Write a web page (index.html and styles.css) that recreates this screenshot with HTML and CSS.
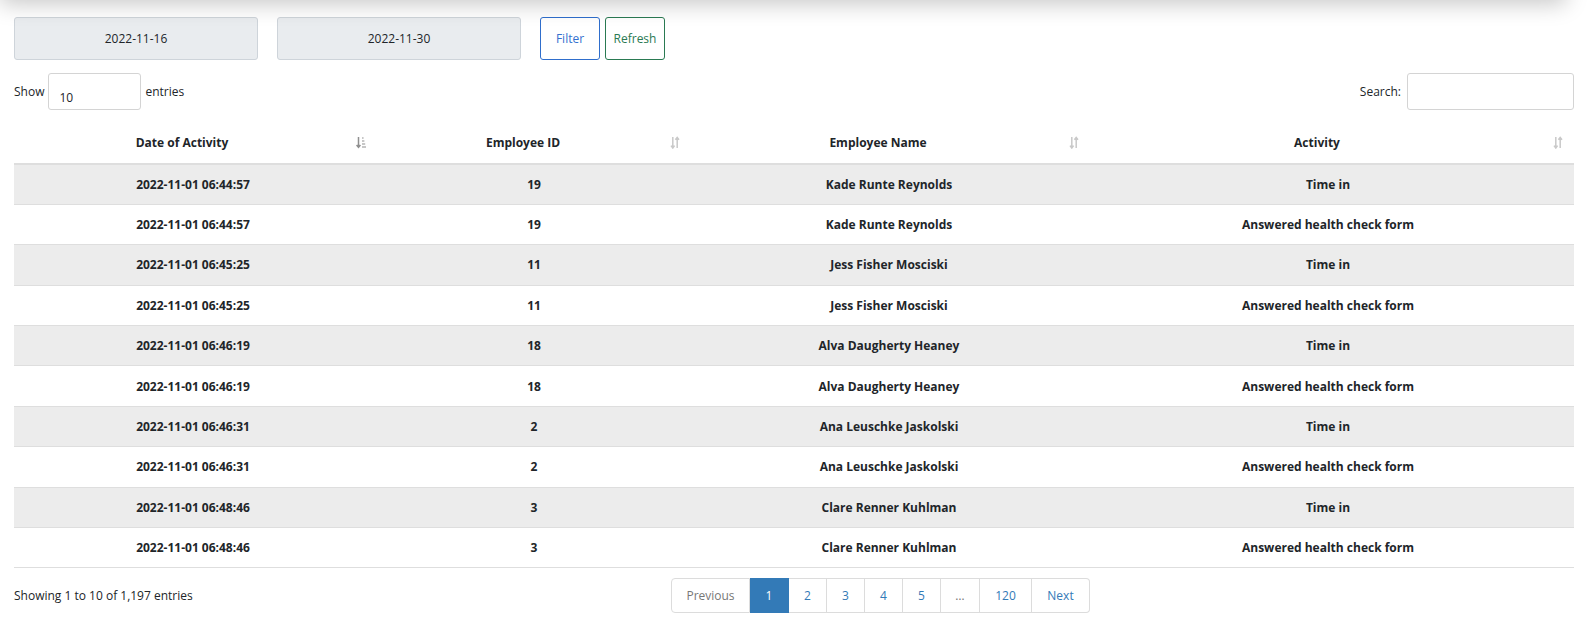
FILE: index.html
```html
<!DOCTYPE html>
<html>
<head>
<meta charset="utf-8">
<link rel="stylesheet" href="styles.css">
</head>
<body>
<div class="topbar"></div>
<main class="page">
  <div class="filters">
    <div class="date-input">2022-11-16</div>
    <div class="date-input">2022-11-30</div>
    <button class="btn btn-blue">Filter</button>
    <button class="btn btn-green">Refresh</button>
  </div>
  <div class="controls">
    <div class="length">Show <span class="length-box">10</span> entries</div>
    <div class="search">Search: <span class="search-box"></span></div>
  </div>
  <table class="grid">
    <colgroup>
      <col class="c1"><col class="c2"><col class="c3"><col class="c4">
    </colgroup>
    <thead>
      <tr>
        <th>Date of Activity<svg class="sort s1" viewBox="0 0 10 13"><path d="M2.5 1v10.5M0.6 9l1.9 2.4L4.4 9" fill="none" stroke="#8f8f8f" stroke-width="1.5"/><path d="M6 2h1.6M6 5h2.4M6 8h3.2M6 11h4" stroke="#b5b5b5" stroke-width="1.4"/></svg></th>
        <th>Employee ID<svg class="sort s2" viewBox="0 0 10 13"><path d="M2.8 1v11M1 9.6l1.8 2.4 1.8-2.4M7.2 12V1.4M5.4 3.8l1.8-2.4L9 3.8" fill="none" stroke="#c9c9c9" stroke-width="1.5"/></svg></th>
        <th>Employee Name<svg class="sort s3" viewBox="0 0 10 13"><path d="M2.8 1v11M1 9.6l1.8 2.4 1.8-2.4M7.2 12V1.4M5.4 3.8l1.8-2.4L9 3.8" fill="none" stroke="#c9c9c9" stroke-width="1.5"/></svg></th>
        <th>Activity<svg class="sort s4" viewBox="0 0 10 13"><path d="M2.8 1v11M1 9.6l1.8 2.4 1.8-2.4M7.2 12V1.4M5.4 3.8l1.8-2.4L9 3.8" fill="none" stroke="#c9c9c9" stroke-width="1.5"/></svg></th>
      </tr>
    </thead>
    <tbody>
      <tr><td>2022-11-01 06:44:57</td><td>19</td><td>Kade Runte Reynolds</td><td>Time in</td></tr>
      <tr><td>2022-11-01 06:44:57</td><td>19</td><td>Kade Runte Reynolds</td><td>Answered health check form</td></tr>
      <tr><td>2022-11-01 06:45:25</td><td>11</td><td>Jess Fisher Mosciski</td><td>Time in</td></tr>
      <tr><td>2022-11-01 06:45:25</td><td>11</td><td>Jess Fisher Mosciski</td><td>Answered health check form</td></tr>
      <tr><td>2022-11-01 06:46:19</td><td>18</td><td>Alva Daugherty Heaney</td><td>Time in</td></tr>
      <tr><td>2022-11-01 06:46:19</td><td>18</td><td>Alva Daugherty Heaney</td><td>Answered health check form</td></tr>
      <tr><td>2022-11-01 06:46:31</td><td>2</td><td>Ana Leuschke Jaskolski</td><td>Time in</td></tr>
      <tr><td>2022-11-01 06:46:31</td><td>2</td><td>Ana Leuschke Jaskolski</td><td>Answered health check form</td></tr>
      <tr><td>2022-11-01 06:48:46</td><td>3</td><td>Clare Renner Kuhlman</td><td>Time in</td></tr>
      <tr><td>2022-11-01 06:48:46</td><td>3</td><td>Clare Renner Kuhlman</td><td>Answered health check form</td></tr>
    </tbody>
  </table>
  <div class="footer">
    <div class="info">Showing 1 to 10 of 1,197 entries</div>
    <ul class="pager">
      <li class="pg prev">Previous</li>
      <li class="pg active">1</li>
      <li class="pg">2</li>
      <li class="pg">3</li>
      <li class="pg">4</li>
      <li class="pg">5</li>
      <li class="pg dots">…</li>
      <li class="pg wide">120</li>
      <li class="pg next">Next</li>
    </ul>
  </div>
</main>
</body>
</html>
```
FILE: styles.css
```css
* { box-sizing: border-box; }
html, body { margin: 0; padding: 0; background: #fff; }
body {
  font-family: "Open Sans", "Noto Sans", sans-serif;
  font-size: 12px;
  color: #212529;
  width: 1588px;
  height: 626px;
  overflow: hidden;
  position: relative;
}
.topbar {
  position: absolute;
  left: 0;
  right: 22px;
  top: -60px;
  height: 60px;
  background: #fff;
  box-shadow: 0 4px 22px rgba(0,0,0,0.22);
}
.page { padding: 17px 14px 0 14px; }

.filters { display: flex; align-items: stretch; height: 43px; }
.date-input {
  width: 244px;
  background: #e9ecef;
  border: 1px solid #ced4da;
  border-radius: 3px;
  display: flex;
  align-items: center;
  justify-content: center;
  margin-right: 19px;
  font-size: 12px;
  color: #212529;
}
.btn {
  font-family: inherit;
  font-size: 12px;
  background: #fff;
  border-radius: 3px;
  padding: 0;
  height: 43px;
  width: 60px;
}
.btn-blue { border: 1px solid #2f6ecc; color: #3470cf; margin-right: 5px; }
.btn-green { border: 1px solid #2a7a52; color: #2a7a52; }

.controls {
  display: flex;
  justify-content: space-between;
  align-items: center;
  margin-top: 13px;
  height: 37px;
}
.length { display: flex; align-items: center; }
.length-box {
  display: inline-block;
  width: 93px;
  height: 37px;
  border: 1px solid #d4d4d4;
  border-radius: 3px;
  margin: 0 4px 0 4px;
  padding: 15px 0 0 10px;
  font-size: 12px;
}
.search { display: flex; align-items: center; }
.search-box {
  display: inline-block;
  width: 167px;
  height: 37px;
  border: 1px solid #d4d4d4;
  border-radius: 3px;
  margin-left: 6px;
}

.grid {
  width: 1560px;
  table-layout: fixed;
  border-collapse: collapse;
  margin-top: 11px;
}
.c1 { width: 358px; }
.c2 { width: 324px; }
.c3 { width: 386px; }
.c4 { width: 492px; }
.grid th {
  position: relative;
  height: 43px;
  font-weight: 700;
  text-align: center;
  padding: 0 22px 0 0;
  border-bottom: 2px solid #dedede;
  color: #212529;
}
.sort {
  position: absolute;
  top: 50%;
  margin-top: -6px;
  width: 10px;
  height: 13px;
}
.s1 { right: 6px; }
.s2 { right: 16px; }
.s3 { right: 3px; }
.s4 { right: 11px; }
.grid td {
  height: 40.4px;
  text-align: center;
  font-weight: 700;
  padding: 0;
  border-bottom: 1px solid #dedede;
}
.grid tbody tr:nth-child(odd) td { background: #ececec; }

.footer {
  display: grid;
  grid-template-columns: 657px 1fr;
  align-items: center;
  margin-top: 10px;
}
.pager {
  list-style: none;
  margin: 0;
  padding: 0;
  display: flex;
  height: 35px;
}
.pg {
  display: flex;
  align-items: center;
  justify-content: center;
  width: 38px;
  border: 1px solid #dcdcdc;
  border-left: none;
  color: #337ab7;
  font-size: 12px;
}
.pg.prev { width: 79px; border-left: 1px solid #dcdcdc; border-radius: 4px 0 0 4px; color: #777; }
.pg.active { width: 39px; background: #337ab7; border-color: #337ab7; color: #fff; }
.pg.dots { width: 39px; color: #777; }
.pg.wide { width: 52px; }
.pg.next { width: 58px; border-radius: 0 4px 4px 0; }
```
